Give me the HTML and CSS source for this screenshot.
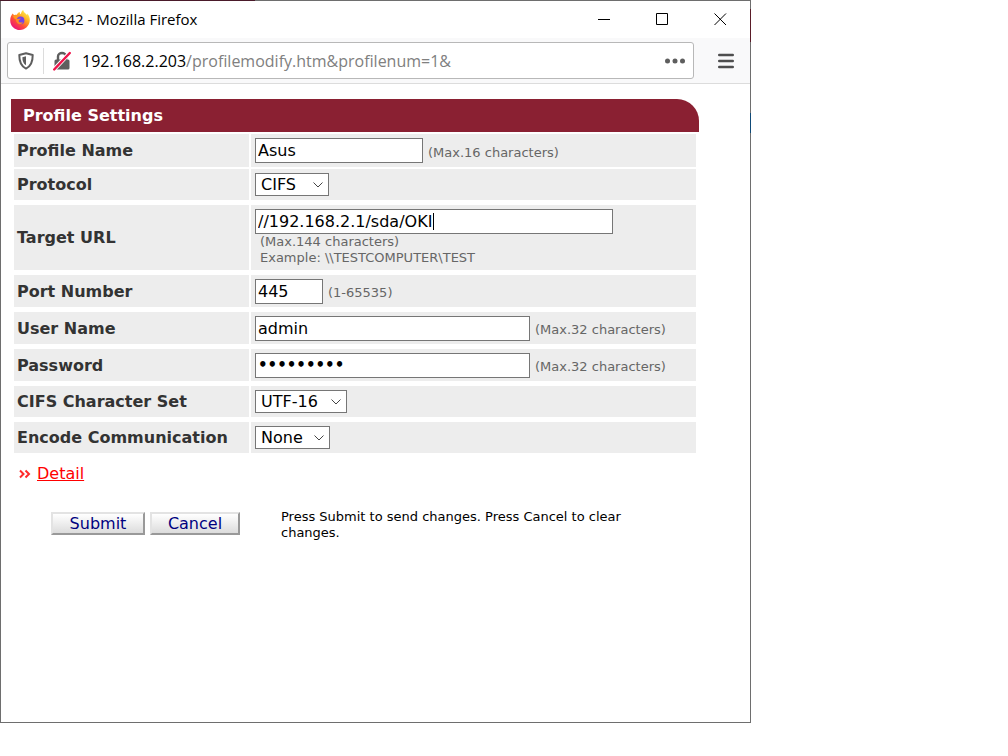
FILE: index.html
```html
<!DOCTYPE html>
<html lang="en">
	<head>
		<meta charset="utf-8">
		<title>MC342</title>
		<link rel="stylesheet" href="styles.css">
	</head>
	<body>
		<div class="window">
			<div class="titlebar">
				<svg class="logo" width="20" height="20" viewBox="0 0 20 20">
					<defs>
						<linearGradient id="fox" x1="0.85" y1="0.1" x2="0.2" y2="0.95">
							<stop offset="0" stop-color="#fff04f"/>
							<stop offset="0.35" stop-color="#ffa51f"/>
							<stop offset="0.65" stop-color="#ff4a3c"/>
							<stop offset="1" stop-color="#e8107c"/>
						</linearGradient>
					</defs>
					<path fill="url(#fox)" d="M2.6 3.6L4.2 5.2C5 4.7 6 4.6 6.8 4.8C7.4 3.4 8.6 2.3 9.8 2C9.6 3 10 3.6 10.8 4.2C11.2 2.4 11.8 0.8 13.2 0C13.4 2.2 15.6 3.2 17 5C17.4 4.6 17.4 4 17.3 3.6C19 5.4 20 8 19.8 10.6C19.4 15.8 15.2 20 10 20C4.6 20 0.2 15.8 0.2 10.4C0.2 7.6 1.2 5.4 2.6 3.6Z"/>
					<path fill="#ff9a1f" d="M3 6C5 4.6 7 5.2 8.4 6.8L10.8 7.4L7.4 9.4C5 9.6 3.6 8 3 6Z"/>
					<circle cx="10.6" cy="10.4" r="3.8" fill="#7542e5"/>
					<path fill="#ff8a25" d="M6 8.6C7.6 9.6 9 8.6 10.8 8.6C10.2 10 8.8 10 8.6 11C9 12.6 11 13 13 12C12 14.6 8.4 15 6.8 12.6C6 11.4 5.8 10 6 8.6Z"/>
				</svg>
				<span class="title">MC342 - Mozilla Firefox</span>
				<button class="winBtn" type="button" aria-label="Minimize">
					<svg width="13" height="13" viewBox="0 0 13 13"><path d="M0 6.5H12" stroke="#000"/></svg>
				</button>
				<button class="winBtn" type="button" aria-label="Maximize">
					<svg width="13" height="13" viewBox="0 0 13 13"><path d="M0.5 0.5H11.5V11.5H0.5Z" stroke="#000" fill="none"/></svg>
				</button>
				<button class="winBtn" type="button" aria-label="Close">
					<svg width="13" height="13" viewBox="0 0 13 13"><path d="M0.5 0.5L12 12M12 0.5L0.5 12" stroke="#000"/></svg>
				</button>
			</div>
			<div class="toolbar">
				<div class="urlbar">
					<svg class="shield" width="16" height="18" viewBox="0 0 16 18">
						<path d="M8 1.3L14.7 3C14.8 9.5 13.5 14 8 16.6C2.5 14 1.2 9.5 1.3 3Z" fill="none" stroke="#5e5e5e" stroke-width="2" stroke-linejoin="round"/>
						<path d="M8 4.3V13.3C5.3 11.6 4.4 9 4.4 5.2Z" fill="#5e5e5e"/>
					</svg>
					<span class="divider"></span>
					<svg class="lock" width="18" height="20" viewBox="0 0 18 20">
						<path d="M5 9V5.5C5 0.8 13 0.8 13 5.5V9" fill="none" stroke="#5e5e5e" stroke-width="2.4"/>
						<rect x="1.5" y="8.5" width="15" height="10" rx="1.5" fill="#5e5e5e"/>
						<path d="M0.5 17L16 0.8" stroke="#fff" stroke-width="1.4"/>
						<path d="M2 19.5L17.5 3" stroke="#fff" stroke-width="1.4"/>
						<path d="M1.2 18.5L16.8 2" stroke="#f0144a" stroke-width="2.4" stroke-linecap="round"/>
					</svg>
					<span class="url">192.168.2.203<span class="path">/profilemodify.htm&amp;profilenum=1&amp;</span></span>
					<button class="dots" type="button" aria-label="Page actions">
						<svg width="20" height="6" viewBox="0 0 20 6" fill="#5e5e5e"><circle cx="2.5" cy="3" r="2.5"/><circle cx="10" cy="3" r="2.5"/><circle cx="17.5" cy="3" r="2.5"/></svg>
					</button>
				</div>
				<button class="menu" type="button" aria-label="Menu">
					<svg width="16" height="16" viewBox="0 0 16 16"><path d="M1.2 2H14.8M1.2 8H14.8M1.2 14H14.8" stroke="#4e4e4e" stroke-width="2.4" stroke-linecap="round"/></svg>
				</button>
			</div>

			<form class="page">
				<h1>Profile Settings</h1>
				<table class="settings">
					<tr>
						<th><label for="profile">Profile Name</label></th>
						<td><input id="profile" class="medium" type="text" value="Asus"><span class="hint">(Max.16 characters)</span></td>
					</tr>
					<tr class="choice">
						<th><label for="protocol">Protocol</label></th>
						<td><select id="protocol" class="cifs"><option>CIFS</option></select></td>
					</tr>
					<tr class="spaced">
						<th><label for="target">Target URL</label></th>
						<td>
							<div class="focused"><input id="target" class="wide" type="text" value="//192.168.2.1/sda/OKI"><span class="caret"></span></div>
							<div class="note">(Max.144 characters)<br>Example: \\TESTCOMPUTER\TEST</div>
						</td>
					</tr>
					<tr class="spaced">
						<th><label for="port">Port Number</label></th>
						<td><input id="port" class="short" type="text" value="445"><span class="hint">(1-65535)</span></td>
					</tr>
					<tr class="spaced">
						<th><label for="user">User Name</label></th>
						<td><input id="user" class="long" type="text" value="admin"><span class="hint">(Max.32 characters)</span></td>
					</tr>
					<tr class="spaced">
						<th><label for="password">Password</label></th>
						<td><input id="password" class="long" type="password" value="password1"><span class="hint">(Max.32 characters)</span></td>
					</tr>
					<tr class="spaced choice">
						<th><label for="charset">CIFS Character Set</label></th>
						<td><select id="charset" class="utf"><option>UTF-16</option></select></td>
					</tr>
					<tr class="spaced choice">
						<th><label for="encode">Encode Communication</label></th>
						<td><select id="encode" class="none"><option>None</option></select></td>
					</tr>
				</table>
				<div class="detail">
					<svg width="12" height="10" viewBox="0 0 12 10"><path d="M1 1.5L4.5 5L1 8.5M6.5 1.5L10 5L6.5 8.5" fill="none" stroke="#ff2a2a" stroke-width="2"/></svg>
					<a href="#detail">Detail</a>
				</div>
				<div class="actions">
					<button class="submit" type="button">Submit</button>
					<button class="cancel" type="button">Cancel</button>
					<p>Press Submit to send changes. Press Cancel to clear changes.</p>
				</div>
			</form>
		</div>
	</body>
</html>
```
FILE: styles.css
```css
*{
	box-sizing:border-box;
}
body{
	margin:0;
	background-color:#fff;
	color:#000;
	font-family:Verdana, "DejaVu Sans", sans-serif;
	font-size:16px;
}
button{
	font-family:inherit;
	font-size:16px;
}
svg{
	display:block;
	flex:none;
}

/* window frame, the desktop shows through its edges */
.window{
	max-width:751px;
	min-height:723px;
	padding:1px;
	background:
		linear-gradient(#fff, #fff) content-box,
		linear-gradient(#4a1a2a, #4a1a2a) 0 0 / 255px 1px no-repeat,
		linear-gradient(#5a1c28, #5a1c28) 100% 9px / 1px 33px no-repeat,
		linear-gradient(#0f4a78, #0f4a78) 100% 113px / 1px 20px no-repeat,
		#6e6e6e;
}
.titlebar{
	display:flex;
	align-items:center;
	height:37px;
	padding:0 1px 0 9px;
	font-family:"Segoe UI", "Open Sans", sans-serif;
	font-size:15px;
}
.title{
	flex:1;
	margin-left:5px;
	padding-bottom:2px;
	white-space:nowrap;
}
.winBtn{
	display:flex;
	align-items:center;
	justify-content:center;
	width:58px;
	height:37px;
	padding:0;
	border:none;
	background:none;
}
.toolbar{
	display:flex;
	align-items:center;
	height:46px;
	padding-left:6px;
	background-color:#f9f9fa;
	border-bottom:1px solid #dcdcdc;
}
.urlbar{
	flex:1;
	display:flex;
	align-items:center;
	height:37px;
	padding:0 8px 0 10px;
	background-color:#fff;
	border:1px solid #b8b8b8;
	border-radius:3px;
	font-family:"Segoe UI", "Open Sans", sans-serif;
}
.divider{
	width:1px;
	height:26px;
	margin:0 9px;
	background-color:#dcdcdc;
}
.url{
	flex:1;
	margin-left:11px;
	padding-top:1px;
	white-space:nowrap;
}
.path{
	color:#808080;
}
.dots,
.menu{
	display:flex;
	padding:0;
	border:none;
	background:none;
}
.menu{
	justify-content:center;
	width:56px;
	padding-right:8px;
	padding-left:16px;
}

.page{
	padding:15px 51px 0 10px;
}
h1{
	margin:0;
	padding:1px 0 0 12px;
	background-color:#8a2032;
	border-top-right-radius:22px;
	color:#fff;
	font-size:16px;
	line-height:32px;
}
.settings{
	width:calc(100% - 2px);
	margin-left:1px;
	border-spacing:2px;
}
th,
td{
	height:33px;
	padding:0 4px;
	background-color:#ededed;
	background-clip:padding-box;
	text-align:left;
}
th{
	width:235px;
	padding-left:3px;
	color:#333;
	white-space:nowrap;
}
.choice th,
.choice td{
	height:31px;
}
.spaced th,
.spaced td{
	height:35px;
	border-top:3px solid #fff;
}
.spaced.choice th,
.spaced.choice td{
	height:34px;
}
input,
select{
	border:1px solid #767676;
	border-radius:0;
	background-color:#fff;
	color:#000;
	font-family:inherit;
	font-size:16px;
	vertical-align:middle;
}
input{
	height:25px;
	padding:0 2px;
}
input[type=password]{
	font-weight:bold;
	font-size:15px;
}
select{
	display:block;
	appearance:none;
	height:23px;
	padding:0 5px;
	background-image:url("data:image/svg+xml,%3Csvg xmlns='http://www.w3.org/2000/svg' width='10' height='6'%3E%3Cpath d='M.5 .5L5 5L9.5 .5' fill='none' stroke='%23444'/%3E%3C/svg%3E");
	background-repeat:no-repeat;
	background-position:right 5px center;
}
.short{
	width:68px;
}
.medium{
	width:168px;
}
.long{
	width:275px;
}
.wide{
	width:358px;
}
.cifs{
	width:74px;
}
.utf{
	width:92px;
}
.none{
	width:75px;
}
.hint,
.note{
	color:#666;
	font-size:13px;
}
.hint{
	display:inline-block;
	margin-left:5px;
	padding-top:3px;
	vertical-align:middle;
}
.note{
	margin-left:5px;
	line-height:16px;
}
.focused{
	position:relative;
	display:flex;
}
.caret{
	position:absolute;
	top:4px;
	left:178px;
	width:1px;
	height:17px;
	background-color:#000;
}
.spaced .focused{
	margin-top:4px;
}
.spaced .note{
	margin-bottom:4px;
}
.detail{
	display:flex;
	align-items:center;
	margin:9px 0 0 8px;
}
.detail a{
	margin-left:6px;
	color:#f00;
}
.actions{
	display:flex;
	align-items:center;
	margin:22px 0 0 40px;
}
.actions button{
	height:23px;
	padding:0;
	border:2px solid;
	border-color:#e3e3e3 #999 #999 #e3e3e3;
	background:linear-gradient(#fff, #dcdcdc);
	color:#000080;
	line-height:19px;
}
.submit{
	width:94px;
}
.cancel{
	width:90px;
	margin-left:5px;
}
.actions p{
	flex:1;
	margin:4px 20px 0 41px;
	font-size:13px;
	line-height:16px;
}
```
